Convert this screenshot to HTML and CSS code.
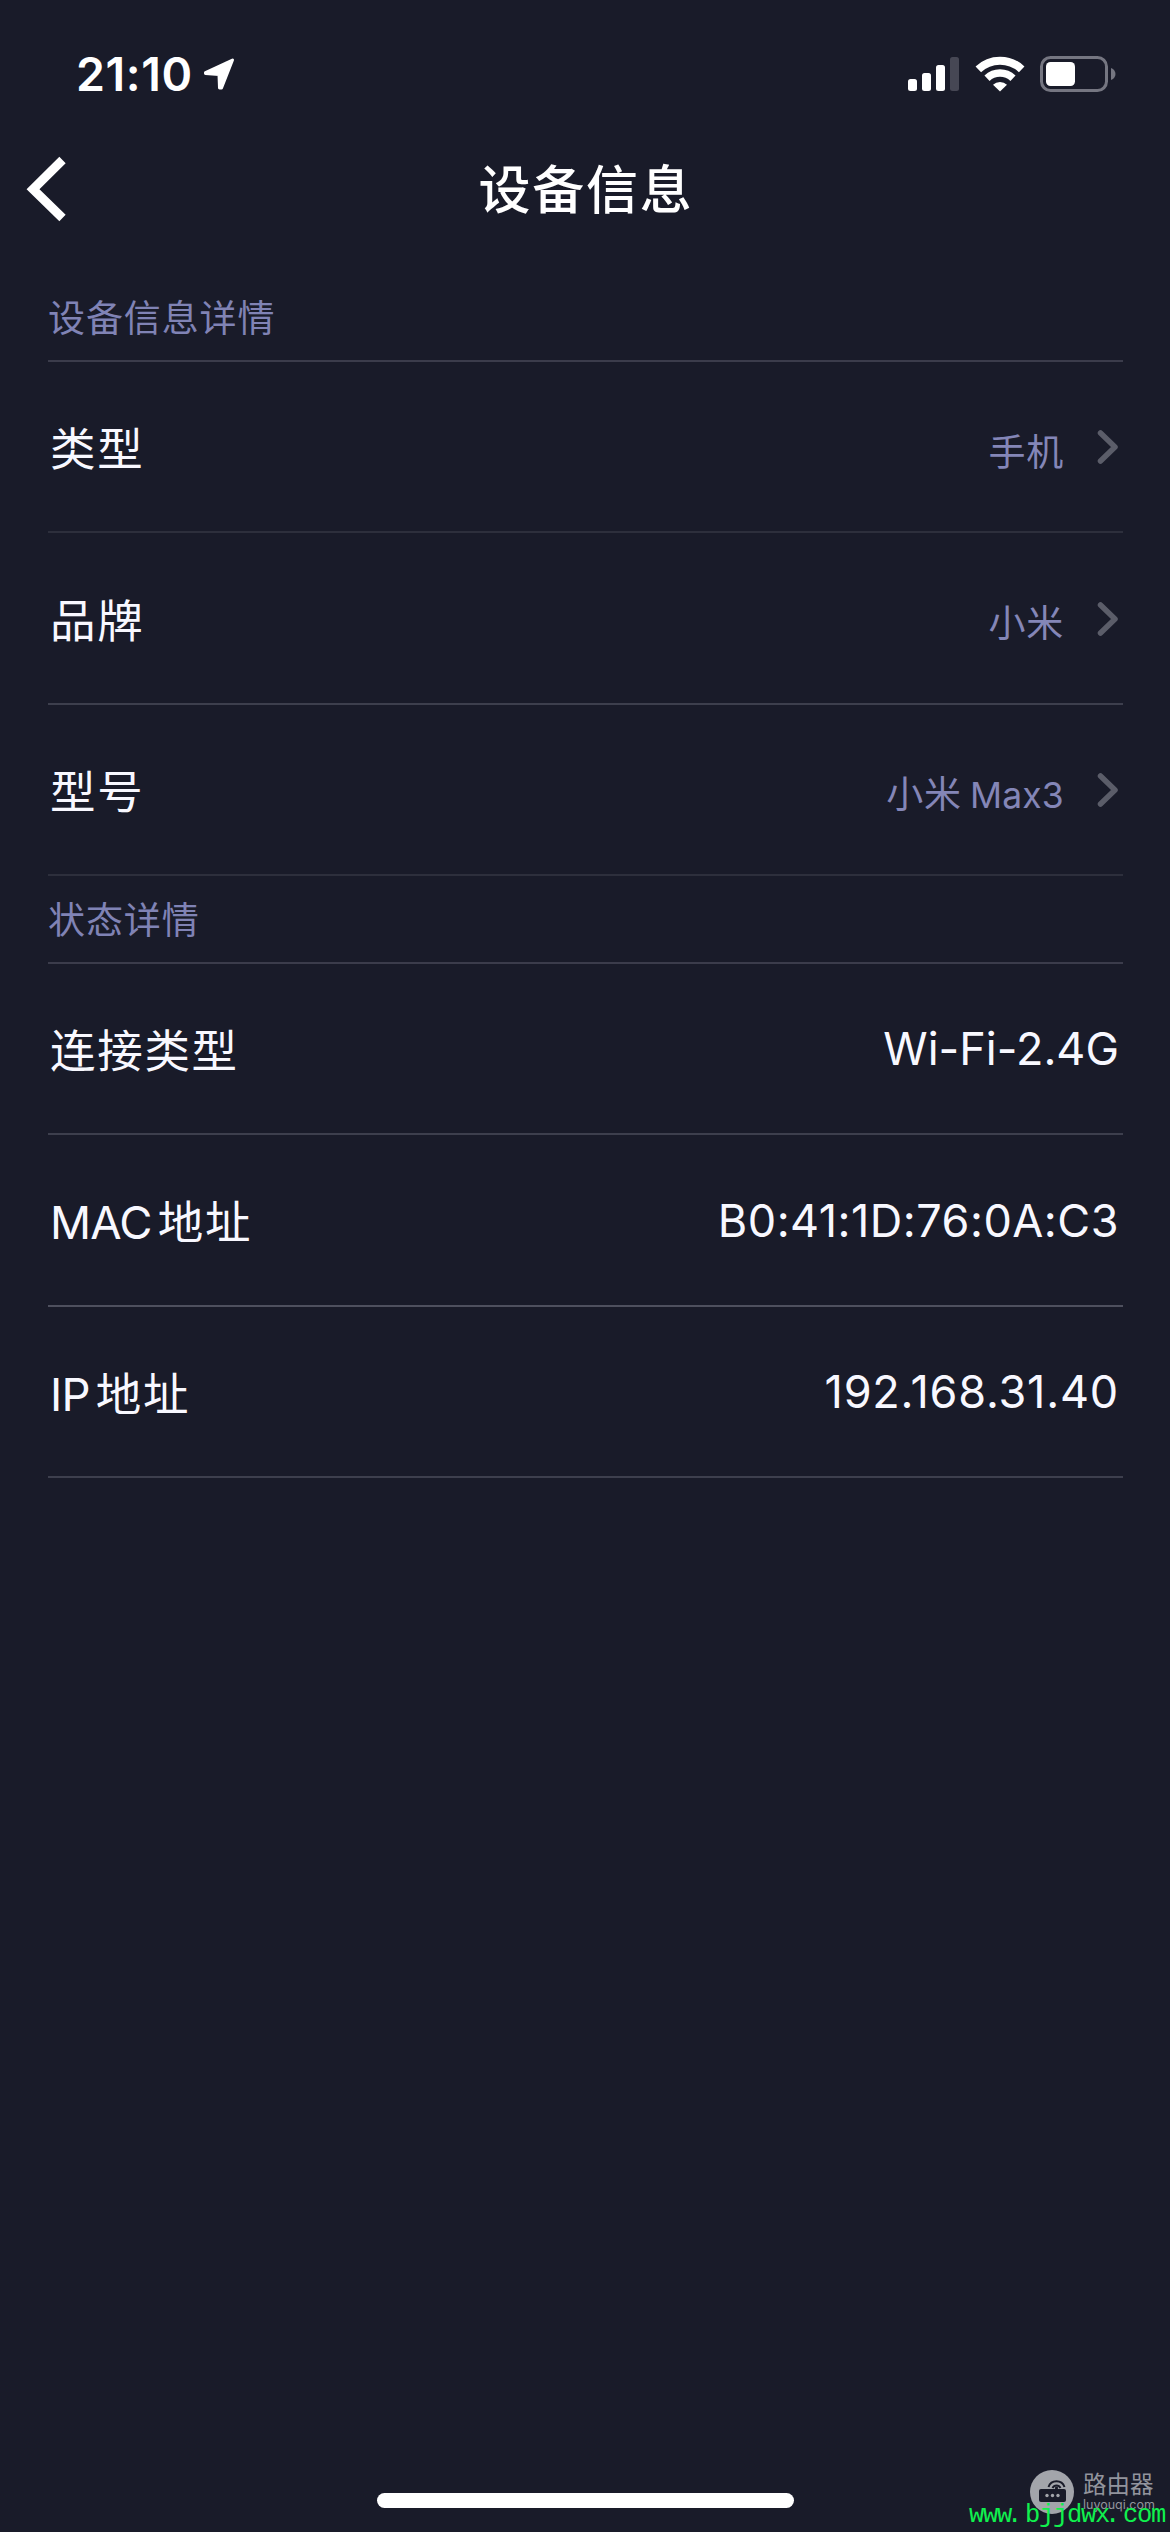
FILE: index.html
```
<!DOCTYPE html>
<html lang="zh-CN">
<head>
    <meta charset="UTF-8">
    <meta name="viewport" content="width=device-width, initial-scale=1.0">
    <title>设备信息</title>
    <link rel="stylesheet" href="styles.css">
</head>
<body>
    <div class="statusbar">
        <span class="time">21:10</span>
        <svg class="location" width="34" height="34" viewBox="0 0 34 34">
            <path d="M3.5 15.5 L30.5 3 L19.5 31 L17.5 31 L17 17.5 L3.5 16.5 Z" fill="#fff" stroke="#fff" stroke-width="3" stroke-linejoin="round"/>
        </svg>
        <div class="status-icons">
            <svg width="52" height="36" viewBox="0 0 52 36">
                <rect x="0" y="23" width="9" height="12" rx="2.5" fill="#fff"/>
                <rect x="14" y="17" width="9" height="18" rx="2.5" fill="#fff"/>
                <rect x="28" y="9" width="9" height="26" rx="2.5" fill="#fff"/>
                <rect x="42" y="1" width="9" height="34" rx="2.5" fill="#464754"/>
            </svg>
            <svg width="50" height="36" viewBox="0 0 50 36">
                <path d="M3.3 13.3 A31.5 31.5 0 0 1 46.7 13.3" fill="none" stroke="#fff" stroke-width="8"/>
                <path d="M12 22.2 A19 19 0 0 1 38 22.2" fill="none" stroke="#fff" stroke-width="7.5"/>
                <path d="M25 35.5 L18 28.7 A10.5 10.5 0 0 1 32 28.7 Z" fill="#fff"/>
            </svg>
            <svg width="76" height="36" viewBox="0 0 76 36">
                <rect x="1.5" y="1.5" width="65" height="33" rx="9" fill="none" stroke="#757681" stroke-width="3"/>
                <rect x="6" y="6" width="29" height="24" rx="4.5" fill="#fff"/>
                <path d="M71 12 C77 14 77 22 71 24 Z" fill="#757681"/>
            </svg>
        </div>
    </div>

    <header class="navbar">
        <button type="button" class="back" aria-label="返回">
            <svg width="40" height="66" viewBox="0 0 40 66">
                <path d="M36.5 4 L7 33.2 L36.5 62" fill="none" stroke="#fff" stroke-width="9"/>
            </svg>
        </button>
        <h1>设备信息</h1>
    </header>

    <main>
        <h2>设备信息详情</h2>
        <ul>
            <li class="row faint">
                <span class="label">类型</span>
                <span class="value link">手机</span>
                <svg class="chevron" width="22" height="36" viewBox="0 0 22 36"><path d="M3.5 4 L18 18 L3.5 32"/></svg>
            </li>
            <li class="row">
                <span class="label">品牌</span>
                <span class="value link">小米</span>
                <svg class="chevron" width="22" height="36" viewBox="0 0 22 36"><path d="M3.5 4 L18 18 L3.5 32"/></svg>
            </li>
            <li class="row faint">
                <span class="label">型号</span>
                <span class="value link">小米<span class="latin">Max3</span></span>
                <svg class="chevron" width="22" height="36" viewBox="0 0 22 36"><path d="M3.5 4 L18 18 L3.5 32"/></svg>
            </li>
        </ul>

        <h2>状态详情</h2>
        <ul>
            <li class="row">
                <span class="label">连接类型</span>
                <span class="value">Wi-Fi-2.4G</span>
            </li>
            <li class="row strong">
                <span class="label"><span class="abbr">MAC</span>地址</span>
                <span class="value mac">B0:41:1D:76:0A:C3</span>
            </li>
            <li class="row">
                <span class="label"><span class="abbr">IP</span>地址</span>
                <span class="value ip">192.168.31.40</span>
            </li>
        </ul>
    </main>

    <div class="home-indicator"></div>

    <div class="brand">
        <svg width="44" height="44" viewBox="0 0 44 44">
            <circle cx="22" cy="22" r="22" fill="#a3a5ab"/>
            <rect x="9" y="19" width="27" height="13" rx="2" fill="#191b29"/>
            <path d="M18.5 17 A8.5 8.5 0 0 1 34.5 17 M22.5 18 A4.5 4.5 0 0 1 30.5 18" fill="none" stroke="#191b29" stroke-width="2"/>
            <circle cx="26.5" cy="18" r="1.6" fill="#191b29"/>
            <circle cx="17" cy="25.5" r="1.7" fill="#a3a5ab"/>
            <circle cx="22.5" cy="25.5" r="1.7" fill="#a3a5ab"/>
            <circle cx="28" cy="25.5" r="1.7" fill="#a3a5ab"/>
        </svg>
        <div class="brand-text">
            <span class="brand-name">路由器</span>
            <span class="brand-url">luyouqi.com</span>
        </div>
    </div>
    <div class="site">www<span class="dot">.</span>bjjdwx<span class="dot">.</span>com</div>
</body>
</html>
```
FILE: styles.css
```
* {
    box-sizing: border-box;
}

body {
    margin: 0;
    width: 1170px;
    height: 2532px;
    position: relative;
    overflow: hidden;
    background-color: #191b29;
    color: #f8f8ff;
    font-family: Inter, "Noto Sans CJK SC", sans-serif;
}

svg {
    display: block;
    flex-shrink: 0;
}

/* Statusleiste */
.statusbar {
    display: flex;
    align-items: center;
    height: 148px;
    padding: 0 54px 0 76px;
}

.time {
    width: 126px;
    font-size: 46.5px;
    font-weight: 600;
    line-height: 56px;
    letter-spacing: 0.6px;
    white-space: nowrap;
    color: #fff;
}

.status-icons {
    display: flex;
    gap: 15px;
    margin-left: auto;
}

.navbar {
    display: grid;
    grid-template-columns: 120px 1fr 120px;
    align-items: center;
    height: 82px;
}

.back {
    padding: 0 0 0 26px;
    border: none;
    background: none;
    cursor: pointer;
}

h1 {
    margin: 0;
    padding: 4px 0 0 2px;
    font-size: 52px;
    font-weight: 500;
    line-height: 64px;
    letter-spacing: 1.8px;
    text-align: center;
    color: #fff;
}

main {
    padding: 44.4px 47px 0 48px;
}

h2 {
    margin: 0;
    height: 87.6px;
    border-bottom: 2px solid #3b3c4b;
    font-size: 37px;
    font-weight: 400;
    line-height: 89px;
    letter-spacing: 0.9px;
    color: #8083b5;
}

ul {
    margin: 0;
    padding: 0;
    list-style: none;
}

.row {
    display: flex;
    align-items: center;
    height: 171.4px;
    padding: 0 4px 0 2px;
    border-bottom: 2px solid #3d3f4d;
}

.row.faint {
    border-bottom-color: #2d2f3c;
}

.row.strong {
    border-bottom-color: #4e505e;
}

.label {
    padding-top: 7px;
    font-size: 45.5px;
    line-height: 60px;
    letter-spacing: 1.7px;
}

.abbr {
    margin-right: 6px;
    letter-spacing: -0.8px;
}

.value {
    margin-left: auto;
    padding-top: 2px;
    font-size: 45px;
    line-height: 60px;
}

.mac {
    letter-spacing: 0.5px;
}

.ip {
    letter-spacing: 0.8px;
}

.link {
    padding-top: 12px;
    font-size: 37px;
    letter-spacing: 0.8px;
    color: #8486b7;
}

.latin {
    margin-left: 8px;
    font-size: 35.5px;
    letter-spacing: 0.2px;
}

.chevron {
    margin: 1px 0 0 33px;
}

.chevron path {
    fill: none;
    stroke: #5b5d69;
    stroke-width: 5.5;
    stroke-linecap: round;
    stroke-linejoin: round;
}

.home-indicator {
    position: absolute;
    left: 377px;
    bottom: 24px;
    width: 417px;
    height: 15px;
    border-radius: 8px;
    background-color: #fff;
}

/* Wasserzeichen */
.brand {
    position: absolute;
    left: 1030px;
    top: 2470px;
    display: flex;
    gap: 9px;
}

.brand-text {
    display: flex;
    flex-direction: column;
    color: #92949d;
}

.brand-name {
    font-size: 23.5px;
    line-height: 29px;
}

.brand-url {
    font-size: 12.5px;
    line-height: 11px;
}

.site {
    position: absolute;
    right: 5px;
    bottom: 2px;
    font-family: "Liberation Mono", monospace;
    font-size: 25.5px;
    line-height: 28px;
    letter-spacing: -1.3px;
    color: #10f04e;
}

.dot {
    margin: 0 4px 0 -4px;
}
```
